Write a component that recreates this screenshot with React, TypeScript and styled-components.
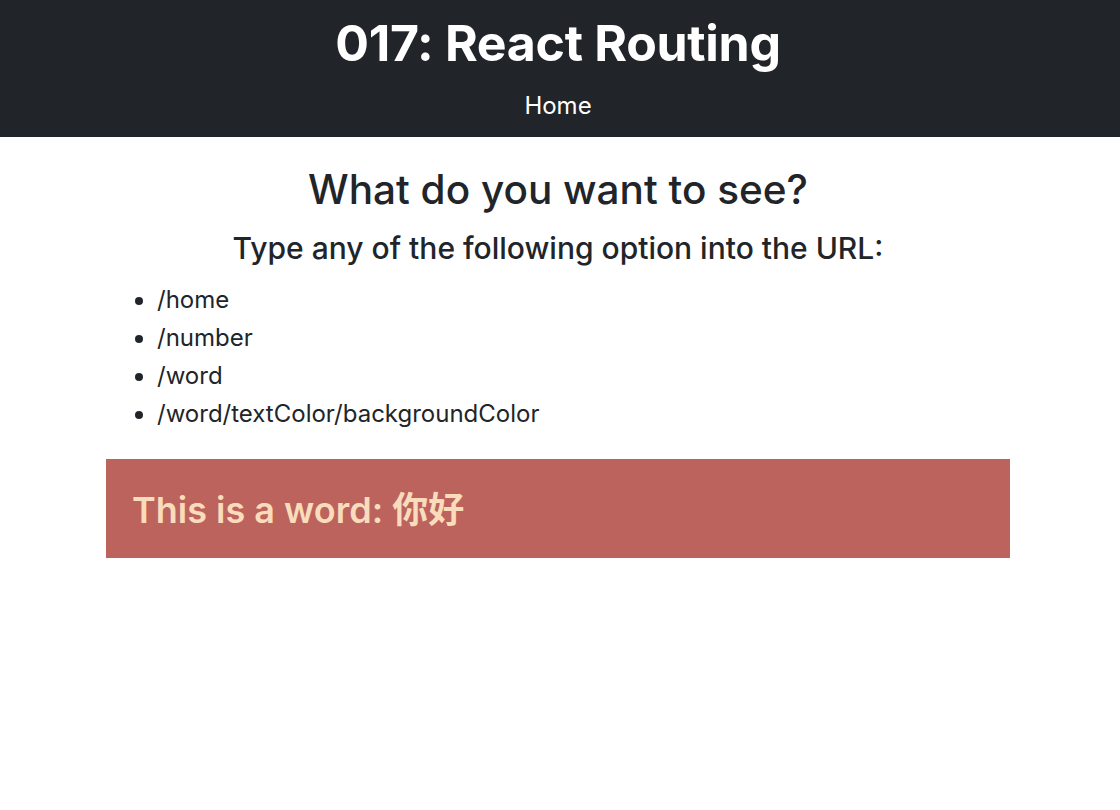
import React from 'react';
import styled, { createGlobalStyle } from "styled-components";

const GlobalStyle = createGlobalStyle`
  body {
    margin: 0;
    font-family: Inter, "Noto Sans CJK SC", sans-serif;
    color: #212529;
    background: #fff;
  }
`

const routes = ['/home', '/number', '/word', '/word/textColor/backgroundColor'];

const App = () => {
    return (
        <>
            <GlobalStyle />
            <Header>
                <Title>017: React Routing</Title>
                <NavLink href="#">Home</NavLink>
            </Header>
            <Main>
                <Heading>What do you want to see?</Heading>
                <SubHeading>Type any of the following option into the URL:</SubHeading>
                <RouteList>
                    {routes.map(r => <li key={r}>{r}</li>)}
                </RouteList>
                <WordBox $bg="#bd635e" $color="#f8dcbb">
                    This is a word: 你好
                </WordBox>
            </Main>
        </>
    );
};

export default App;

const Header = styled.header`
  background: #212529;
  height: 137px;
  display: flex;
  flex-direction: column;
  align-items: center;
  box-sizing: border-box;
  padding: 12px 4px 0 0;
`
const Title = styled.h1`
  margin: 0;
  color: #fff;
  font-size: 50px;
  font-weight: 700;
  line-height: 62px;
  letter-spacing: -0.3px;
`
const NavLink = styled.a`
  color: #fff;
  text-decoration: none;
  font-size: 24px;
  line-height: 30px;
  margin-top: 17px;
`
const Main = styled.main`
  width: 904px;
  margin: 0 0 0 calc(50% - 454px);
`
const Heading = styled.h2`
  text-align: center;
  margin: 28px 0 0;
  font-size: 40.5px;
  font-weight: 500;
  line-height: 50px;
`
const SubHeading = styled.h3`
  text-align: center;
  margin: 15px 0 0;
  font-size: 30px;
  font-weight: 500;
  line-height: 36px;
`
const RouteList = styled.ul`
  margin: 15px 0 0;
  padding-left: 51px;
  font-size: 24px;
  line-height: 38px;
`
const WordBox = styled.div<{ $bg: string; $color: string }>`
  margin-top: 26px;
  height: 99px;
  box-sizing: border-box;
  padding: 0 26px 4px;
  display: flex;
  align-items: center;
  background: ${p => p.$bg};
  color: ${p => p.$color};
  font-size: 36px;
  font-weight: 600;
`
